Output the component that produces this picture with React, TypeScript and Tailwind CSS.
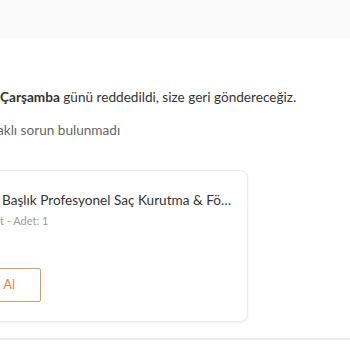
export default function App() {
  return (
    <div
      className="w-[350px] h-[350px] bg-white overflow-hidden relative"
      style={{ fontFamily: '"Lato", "Open Sans", sans-serif' }}
    >
      <div className="h-[38px] bg-[#fafafa]" />
      <div className="pt-[49px]">
        <p className="whitespace-nowrap text-[13.6px] leading-[20px] text-[#333333]">
          <span className="font-bold">Çarşamba</span> günü reddedildi, size geri göndereceğiz.
        </p>
        <p className="mt-[13px] whitespace-nowrap text-[13.6px] leading-[20px] text-[#666666] -ml-[3px]">
          aklı sorun bulunmadı
        </p>
        <div className="mt-[30px] -ml-[20px] w-[268px] h-[152px] rounded-[8px] border border-[#ebebeb] shadow-[0_1px_3px_rgba(0,0,0,0.06)] bg-white">
          <div className="pl-[21px] pt-[19px]">
            <p className="w-[233px] truncate text-[13.6px] leading-[20px] text-[#333333]">
              Başlık Profesyonel Saç Kurutma &amp; Fön Makinesi
            </p>
            <p className="mt-[3px] whitespace-nowrap text-[11px] leading-[16px] text-[#999999] -ml-[2px]">
              t - Adet: 1
            </p>
            <div className="mt-[39px] -ml-[21px] w-[60px] h-[34px] border border-[#cfa06a] rounded-[2px] flex items-center justify-end pr-[25px] text-[13px] text-[#f0814a]">
              Al
            </div>
          </div>
        </div>
        <div className="mt-[16px] h-[2px] bg-[#ececec]" />
      </div>
    </div>
  );
}
